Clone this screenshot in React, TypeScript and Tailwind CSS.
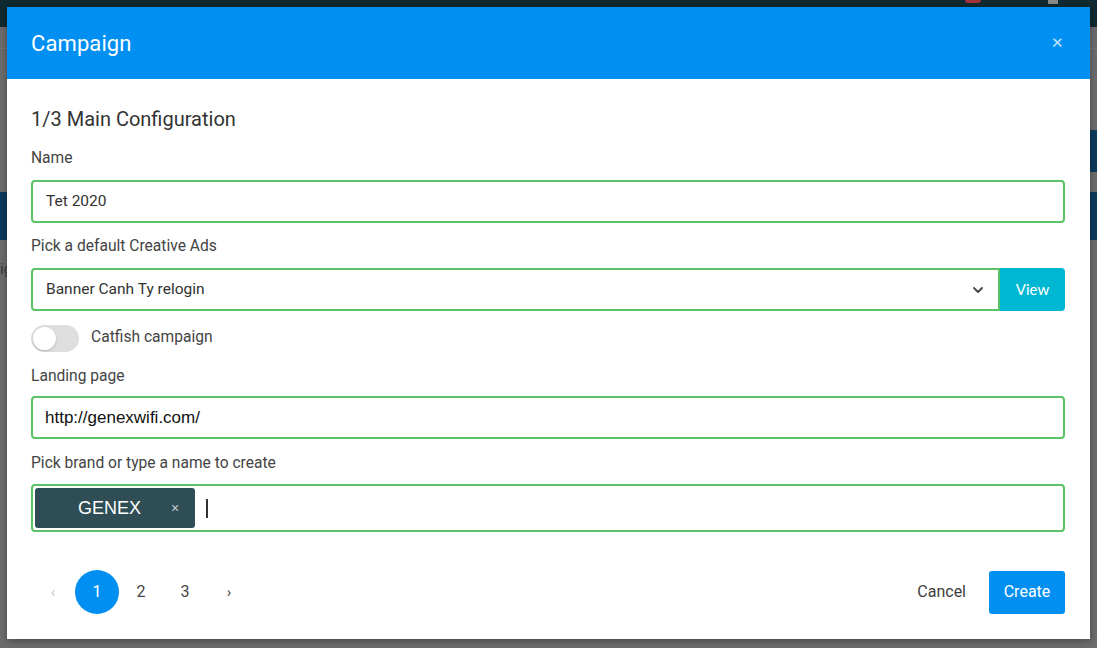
import React from "react";

export default function App() {
  return (
    <div
      className="relative w-[1097px] h-[648px] overflow-hidden bg-[#6d6d6d]"
      style={{ fontFamily: "Roboto, 'Noto Sans', sans-serif" }}
    >
      {/* page behind the overlay */}
      <div className="absolute left-0 top-0 w-full h-[27px] bg-[#0f2a30]" />
      <div className="absolute left-[965px] top-0 w-[16px] h-[3px] rounded-b bg-[#a0343f]" />
      <div className="absolute left-[1048px] top-0 w-[10px] h-[4px] bg-[#8a8a8a]" />
      <div className="absolute left-0 top-[48px] w-full h-px bg-[#777]" />
      <div className="absolute left-0 top-[192px] w-[7px] h-[48px] bg-[#0d3b5c]" />
      <div className="absolute right-0 top-[130px] w-[7px] h-[42px] bg-[#0d3b5c]" />
      <div className="absolute right-0 top-[192px] w-[7px] h-[48px] bg-[#0d3b5c]" />
      <div className="absolute left-0 top-[262px] text-[15px] text-[#3a3a3a] leading-none">ig</div>

      {/* modal */}
      <div className="relative mx-[7px] mt-[7px] w-[1083px] bg-white shadow-[0_2px_8px_rgba(0,0,0,0.35)]">
        <div className="h-[72px] bg-[#0190f2] flex items-center justify-between pl-[24px] pr-[26px]">
          <div className="text-white text-[22px] tracking-[0.1px]">Campaign</div>
          <div className="text-[#bfe3ff] text-[15px] leading-none">✕</div>
        </div>

        <div className="pl-[24px] pr-[25px] pt-[26px] pb-[25px] text-[#3d3d3d]">
          <div className="text-[20px] leading-[28px] text-[#333]">1/3 Main Configuration</div>

          <div className="mt-[15px] text-[15.6px] leading-[20px] text-[#444]">Name</div>
          <div className="mt-[12px] h-[43px] border-2 border-[#5cc26a] rounded-[4px] flex items-center pl-[13px] text-[15.5px] text-[#333]">
            Tet 2020
          </div>

          <div className="mt-[13px] text-[15.6px] leading-[20px] text-[#444]">Pick a default Creative Ads</div>
          <div className="mt-[12px] h-[43px] flex">
            <div className="flex-1 border-2 border-[#5cc26a] rounded-l-[4px] flex items-center justify-between pl-[13px] pr-[14px] text-[15.5px] text-[#333]">
              <span>Banner Canh Ty relogin</span>
              <svg width="12" height="8" viewBox="0 0 12 8" fill="none">
                <path d="M2 2l4 4 4-4" stroke="#444" strokeWidth="1.8" strokeLinecap="round" strokeLinejoin="round" />
              </svg>
            </div>
            <div className="w-[65px] bg-[#00b7d3] rounded-r-[4px] flex items-center justify-center text-white text-[15px]" style={{ fontFamily: "Lato, sans-serif" }}>
              View
            </div>
          </div>

          <div className="mt-[13px] h-[28px] flex items-center">
            <div className="relative w-[48px] h-[27px] rounded-full bg-[#dedede]">
              <div className="absolute left-[2px] top-[2px] w-[23px] h-[23px] rounded-full bg-white shadow-[0_1px_2px_rgba(0,0,0,0.2)]" />
            </div>
            <div className="ml-[12px] text-[15.6px] text-[#444]">Catfish campaign</div>
          </div>

          <div className="mt-[14px] text-[15.6px] leading-[20px] text-[#444]">Landing page</div>
          <div
            className="mt-[10px] h-[43px] border-2 border-[#5cc26a] rounded-[4px] flex items-center pl-[12px] text-[17px] text-[#111]"
            style={{ fontFamily: "'Liberation Sans', Arial, sans-serif" }}
          >
            http://genexwifi.com/
          </div>

          <div className="mt-[14px] text-[15.6px] leading-[20px] text-[#444]">Pick brand or type a name to create</div>
          <div className="mt-[11px] h-[48px] border-2 border-[#5cc26a] rounded-[4px] flex items-center pl-[2px]">
            <div
              className="relative w-[160px] h-[40px] bg-[#2e4d55] rounded-[3px] flex items-center"
              style={{ fontFamily: "'Liberation Sans', Arial, sans-serif" }}
            >
              <span className="absolute left-[43px] text-white text-[18px]">GENEX</span>
              <span className="absolute left-[136px] text-[#c8d2d4] text-[14px]">×</span>
            </div>
            <div className="ml-[11px] w-[1.5px] h-[19px] bg-[#333]" />
          </div>

          <div className="mt-[38px] flex items-center justify-between">
            <div className="flex items-center">
              <div className="w-[44px] h-[44px] flex items-center justify-center text-[#c4c4c4] text-[15px]">‹</div>
              <div className="w-[44px] h-[44px] rounded-full bg-[#0190f2] flex items-center justify-center text-white text-[16px]">1</div>
              <div className="w-[44px] h-[44px] flex items-center justify-center text-[#444] text-[16px]">2</div>
              <div className="w-[44px] h-[44px] flex items-center justify-center text-[#444] text-[16px]">3</div>
              <div className="w-[44px] h-[44px] flex items-center justify-center text-[#444] text-[15px]">›</div>
            </div>
            <div className="flex items-center">
              <div className="text-[16px] text-[#3d3d3d] mr-[23px]">Cancel</div>
              <div className="w-[76px] h-[43px] bg-[#0190f2] rounded-[3px] flex items-center justify-center text-white text-[16px]">
                Create
              </div>
            </div>
          </div>
        </div>
      </div>
    </div>
  );
}
